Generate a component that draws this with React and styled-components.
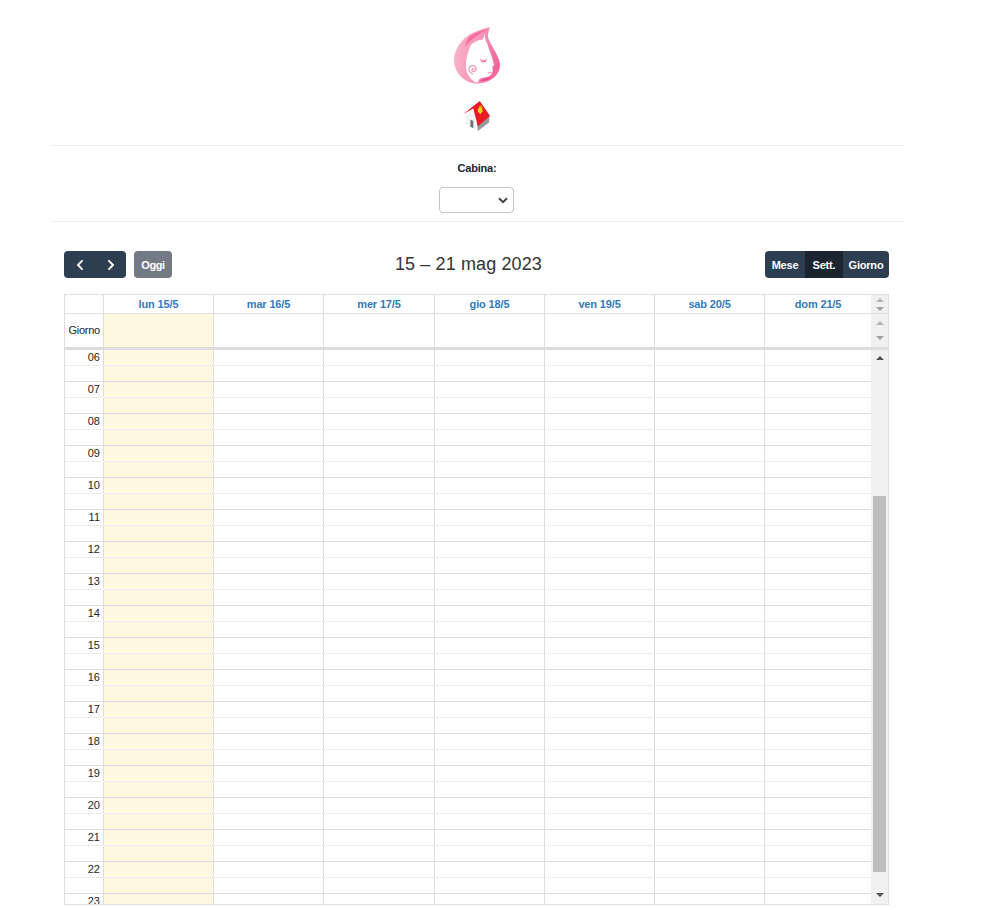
import React from "react";
import styled, { createGlobalStyle, css } from "styled-components";
import { FaChevronLeft, FaChevronRight } from "react-icons/fa";

const Global = createGlobalStyle`
  html, body { margin: 0; padding: 0; background: #fff; height: 910px; overflow: hidden; }
  body { font-family: "Liberation Sans", Arial, sans-serif; font-size: 11px; color: #212529; }
`;

const Page = styled.div`
  width: 852px;
  margin-left: 51px;
  display: flex;
  flex-direction: column;
  height: 910px;
`;
const Brand = styled.header`
  display: flex;
  flex-direction: column;
  align-items: center;
  padding-top: 26px;
  height: 145px;
  box-sizing: border-box;
  gap: 17px;
`;
const Filter = styled.section`
  border-top: 1px solid #eee;
  border-bottom: 1px solid #eee;
  height: 77px;
  box-sizing: border-box;
  display: flex;
  flex-direction: column;
  align-items: center;
  padding-top: 16px;
`;
const Label = styled.label`
  font-size: 11px;
  font-weight: 700;
  line-height: 13px;
  letter-spacing: -0.2px;
  color: #212529;
  margin-bottom: 12px;
`;
const Select = styled.select`
  width: 75px;
  height: 26px;
  box-sizing: border-box;
  margin-right: 1px;
  appearance: none;
  background: #fff url("data:image/svg+xml,%3Csvg xmlns='http://www.w3.org/2000/svg' width='10' height='7'%3E%3Cpath d='M1 1.2l4 4 4-4' fill='none' stroke='%23444' stroke-width='2'/%3E%3C/svg%3E") no-repeat right 5px center;
  border: 1px solid #c4c4c4;
  border-radius: 4px;
  font-size: 11px;
  font-family: inherit;
`;
const Calendar = styled.section`
  margin: 29px 14px 0 13px;
  display: flex;
  flex-direction: column;
`;
const Toolbar = styled.div`
  display: flex;
  align-items: center;
  justify-content: space-between;
  height: 27px;
  margin-bottom: 16px;
`;
const Left = styled.div`
  display: flex;
  gap: 8px;
`;
const Group = styled.div`
  display: flex;
`;
const Btn = styled.button`
  height: 27px;
  box-sizing: border-box;
  border: 0;
  padding: 0;
  font-family: inherit;
  font-size: 11px;
  font-weight: 700;
  letter-spacing: -0.2px;
  color: #fff;
  background: ${(p) => (p.$active ? "#1a252f" : "#2c3e50")};
  width: ${(p) => p.$w}px;
  display: flex;
  align-items: center;
  justify-content: center;
  border-radius: ${(p) => p.$radius || "0"};
  svg { width: 12px; height: 12px; }
`;
const Disabled = styled(Btn)`
  background: #737a85;
  color: #fff;
  letter-spacing: -0.4px;
`;
const Title = styled.h2`
  margin: 0;
  font-size: 18px;
  font-weight: 400;
  color: #333;
  line-height: 27px;
  letter-spacing: 0.12px;
`;
const Frame = styled.div`
  border: 1px solid #ddd;
  display: flex;
  flex-direction: column;
  height: 611px;
  box-sizing: border-box;
  overflow: hidden;
`;
const Row = styled.div`
  display: flex;
  flex: none;
  height: ${(p) => p.$h}px;
  box-sizing: border-box;
  ${(p) => p.$border && css`border-bottom: 1px solid #ddd;`}
`;
const Cells = styled.div`
  flex: 1;
  display: grid;
  grid-template-columns: 39px 110px 110px 111px 110px 110px 110px 1fr;
  min-width: 0;
`;
const Corner = styled.div`
  border-right: 1px solid #ddd;
`;
const DayHead = styled.div`
  border-right: ${(p) => (p.$last ? "0" : "1px solid #ddd")};
  text-align: center;
  font-size: 11px;
  font-weight: 700;
  letter-spacing: -0.15px;
  color: #337ab7;
  line-height: 18px;
`;
const AxisLabel = styled.div`
  border-right: 1px solid #ddd;
  font-size: 11px;
  letter-spacing: -0.25px;
  text-align: right;
  padding-right: 3px;
  color: #212529;
  line-height: ${(p) => p.$lh}px;
`;
const Cell = styled.div`
  border-right: ${(p) => (p.$last ? "0" : "1px solid #ddd")};
  background: ${(p) => (p.$today ? "#fef8e0" : "#fff")};
`;
const Divider = styled.div`
  flex: none;
  height: 3px;
  background: #ddd;
`;
const Body = styled.div`
  flex: 1;
  display: flex;
  min-height: 0;
`;
const Slots = styled.div`
  flex: 1;
  min-width: 0;
  overflow: hidden;
`;
const SlotRow = styled(Cells)`
  height: 16px;
  box-sizing: border-box;
  border-bottom: 1px ${(p) => (p.$half ? "dotted" : "solid")} #ddd;
`;
const SlotAxis = styled.div`
  border-right: 1px solid #ddd;
  font-size: 11px;
  line-height: 15px;
  text-align: right;
  padding-right: 3px;
  color: #212529;
`;
const Bar = styled.div`
  flex: none;
  width: 17px;
  background: #f0f0f0;
  display: flex;
  flex-direction: column;
  align-items: center;
  box-sizing: border-box;
  justify-content: ${(p) => p.$justify || "flex-start"};
  gap: ${(p) => p.$gap || 0}px;
  padding: ${(p) => p.$pad || "0"};
`;
const Arrow = styled.span`
  width: 0;
  height: 0;
  border-left: 4px solid transparent;
  border-right: 4px solid transparent;
  ${(p) =>
    p.$down
      ? css`border-top: 4px solid ${p.$c};`
      : css`border-bottom: 4px solid ${p.$c};`}
`;
const Thumb = styled.div`
  width: 13px;
  height: 376px;
  background: #bebebe;
  margin: 136px 0 21px;
`;

const Logo = () => (
  <svg width="46" height="58" viewBox="0 0 46 58">
    <defs>
      <linearGradient id="drop" x1="0" y1="0.4" x2="1" y2="0.6">
        <stop offset="0" stopColor="#f9b4cb" />
        <stop offset="0.6" stopColor="#f690b5" />
        <stop offset="1" stopColor="#f1609b" />
      </linearGradient>
    </defs>
    <path d="M36 1.3 C28 3.5 16 6 8 15 C3 21 0 27 0 34 C0 47 11 57.5 23 57.5 C36 57.5 46 49 46 39 C46 31 37 20 34.3 12.3 C33.5 9 34.5 5 36 1.3 Z" fill="url(#drop)" />
    <path d="M16 10 C21 7 27 4.5 34 2.5 C28 6 23 10 19 13 C16 15 13 18 11 21 C12 16 13.5 12.5 16 10 Z" fill="#f56f9f" />
    <path d="M17 19 C20 15.5 24 14 29 13.5 L30.5 7.5 L31.5 14 C33 17 34 20 35 23 C36.5 28 39 33 40 39 L38.3 41 L38.8 45 C38 48 36 50 34.3 50.7 L26 52.3 L23.3 56.7 C20 56 16.5 53.5 14.3 49 C12.5 45 12 43 12 40.7 C12 35 12.5 30 14.3 26 C15 23 16 21 17 19 Z" fill="#fff" />
    <path d="M19 48 C15 47 13.5 43 16 40.5 C18.5 38.5 22.5 40 22 43.5 C21.5 46 18 46 18 44 C18 42.5 20 42.5 20 43.5" fill="none" stroke="#f6a0c0" strokeWidth="1.5" />
    <path d="M26 33.5 C28 35 31 35 33 33.5 M27 36 L32 35.4" stroke="#ec4a8a" strokeWidth="0.8" fill="none" />
    <path d="M34 47 L37.5 46.4" stroke="#ef6aa0" strokeWidth="0.8" />
    <path d="M25.3 54.7 C28 52.8 33 52 37.7 50.4 C35 54 30 56 25.3 54.7 Z" fill="#ea4a8c" />
  </svg>
);

const House = () => (
  <svg width="28" height="31" viewBox="0 0 30 33">
    <path d="M2 14 L12 7 L17 22 L16 32 L3 25 Z" fill="#f5f5f5" />
    <path d="M15 24 L28 16 L28 23 L16 32 Z" fill="#999" />
    <path d="M8 20 L11 21 L11 29 L8 27.5 Z" fill="#6e6e6e" />
    <path d="M0 14 L18 0 L29 16 L16 27 L11 8 Z" fill="#ea1b25" />
    <path d="M16 8 L20.5 6 L21 11 L18.5 14 L16 11.5 Z" fill="#f7d51f" />
    <path d="M17 5.5 L20 4.5 L20.5 6.5 L17 8 Z" fill="#d8a512" />
  </svg>
);

const days = ["lun 15/5", "mar 16/5", "mer 17/5", "gio 18/5", "ven 19/5", "sab 20/5", "dom 21/5"];
const hours = ["06","07","08","09","10","11","12","13","14","15","16","17","18","19","20","21","22","23"];

const DayCells = () =>
  days.map((d, i) => <Cell key={d} $today={i === 0} $last={i === 6} />);

export default function App() {
  return (
    <>
      <Global />
      <Page>
        <Brand>
          <Logo />
          <House />
        </Brand>
        <Filter>
          <Label htmlFor="cabina">Cabina:</Label>
          <Select id="cabina" defaultValue="">
            <option value=""></option>
          </Select>
        </Filter>
        <Calendar>
          <Toolbar>
            <Left>
              <Group>
                <Btn $w={31} $radius="4px 0 0 4px" aria-label="prev"><FaChevronLeft /></Btn>
                <Btn $w={31} $radius="0 4px 4px 0" aria-label="next"><FaChevronRight /></Btn>
              </Group>
              <Disabled $w={38} $radius="4px">Oggi</Disabled>
            </Left>
            <Title>15 – 21 mag 2023</Title>
            <Group>
              <Btn $w={40} $radius="4px 0 0 4px">Mese</Btn>
              <Btn $w={38} $active>Sett.</Btn>
              <Btn $w={46} $radius="0 4px 4px 0">Giorno</Btn>
            </Group>
          </Toolbar>
          <Frame>
            <Row $h={19} $border>
              <Cells>
                <Corner />
                {days.map((d, i) => <DayHead key={d} $last={i === 6}>{d}</DayHead>)}
              </Cells>
              <Bar $pad="3px 0 0" $gap={5}>
                <Arrow $c="#b5b5b5" />
                <Arrow $down $c="#a0a0a0" />
              </Bar>
            </Row>
            <Row $h={33}>
              <Cells>
                <AxisLabel $lh={32}>Giorno</AxisLabel>
                <DayCells />
              </Cells>
              <Bar $pad="7px 0 7px" $justify="space-between">
                <Arrow $c="#b5b5b5" />
                <Arrow $down $c="#a0a0a0" />
              </Bar>
            </Row>
            <Divider />
            <Body>
              <Slots>
                {hours.map((h) => (
                  <React.Fragment key={h}>
                    <SlotRow $half>
                      <SlotAxis>{h}</SlotAxis>
                      <DayCells />
                    </SlotRow>
                    <SlotRow>
                      <Corner />
                      <DayCells />
                    </SlotRow>
                  </React.Fragment>
                ))}
              </Slots>
              <Bar $pad="6px 0 0">
                <Arrow $c="#505050" />
                <Thumb />
                <Arrow $down $c="#505050" />
              </Bar>
            </Body>
          </Frame>
        </Calendar>
      </Page>
    </>
  );
}
